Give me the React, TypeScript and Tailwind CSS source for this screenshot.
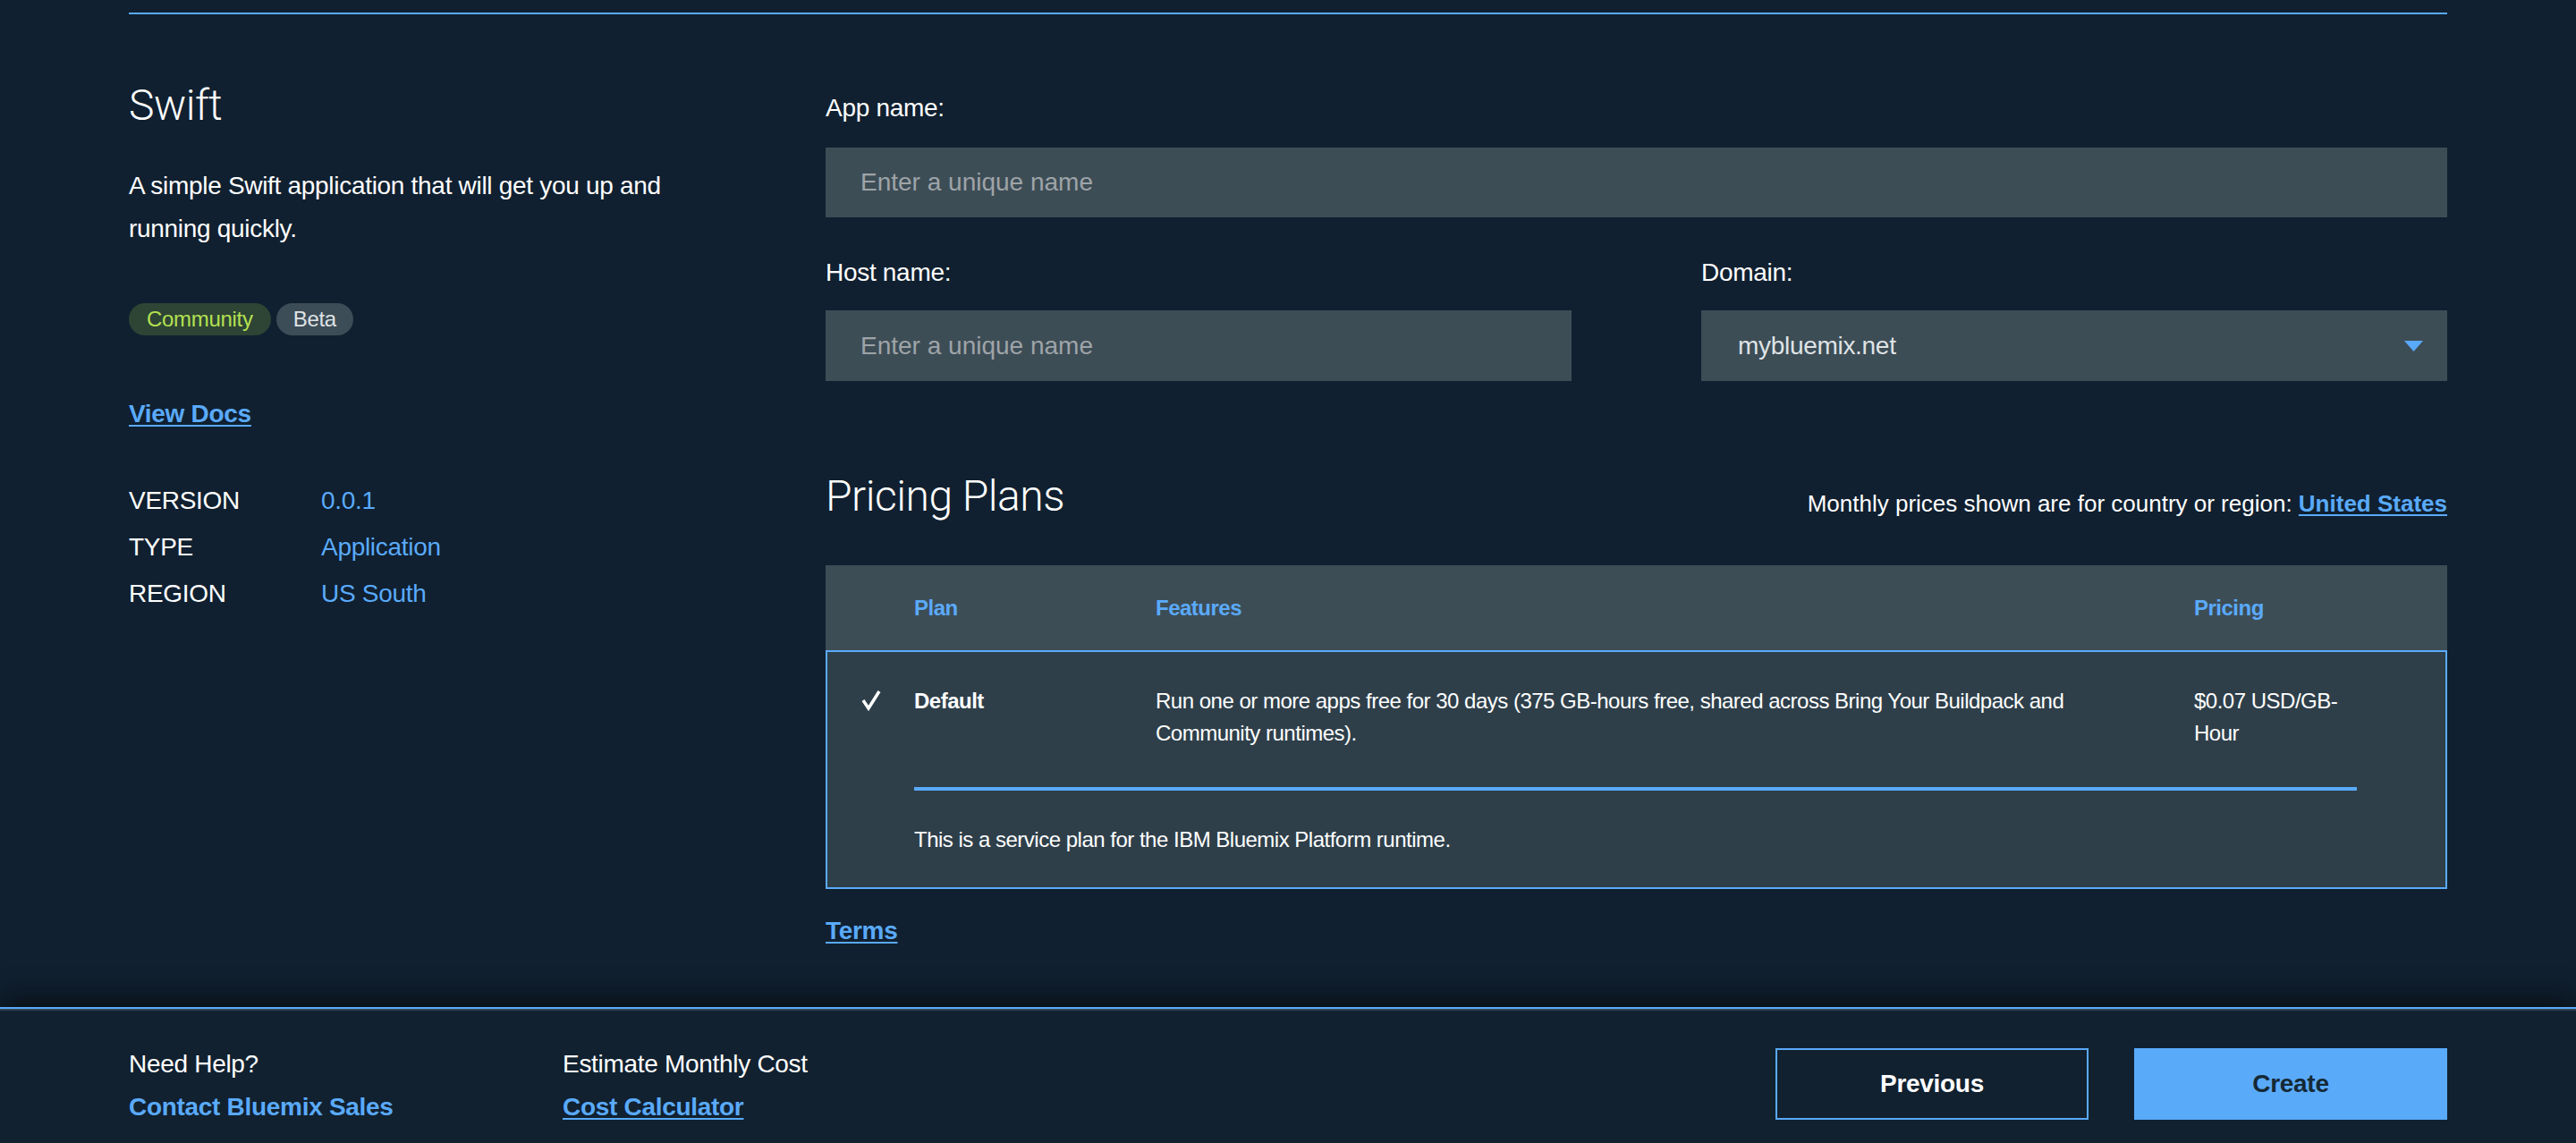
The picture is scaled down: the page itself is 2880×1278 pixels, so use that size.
export default function App() {
  return (
    <div className="min-h-screen flex flex-col bg-[#102030] text-white tracking-[-0.3px] font-['Liberation_Sans',Arial,sans-serif]">
      {/* Main content */}
      <main className="flex-1 px-[144px]">
        <div className="mt-[14px] h-[2px] bg-[#5aaafa]" />

        <div className="flex items-start">
          {/* Left: service details */}
          <div className="w-[779px] shrink-0">
            <h1 className="mt-[78px] text-[48px] leading-[48px] font-light font-['Roboto','Liberation_Sans',sans-serif] tracking-[-0.5px]">
              Swift
            </h1>
            <p className="mt-[42px] max-w-[660px] text-[28px] leading-[48px]">
              A simple Swift application that will get you up and running quickly.
            </p>
            <div className="mt-[59px] flex gap-[6px]">
              <span className="h-[36px] px-[20px] rounded-full bg-[#2e4435] text-[#b4e051] text-[24px] leading-[36px]">
                Community
              </span>
              <span className="h-[36px] px-[19px] rounded-full bg-[#3d4d57] text-[#dfe3e6] text-[24px] leading-[36px]">
                Beta
              </span>
            </div>
            <a href="#" className="mt-[64px] block w-fit text-[28px] leading-[48px] font-bold text-[#5aaafa] underline underline-offset-[3px] decoration-2">
              View Docs
            </a>
            <div className="mt-[47px] text-[28px] leading-[52px]">
              {[
                ["VERSION", "0.0.1"],
                ["TYPE", "Application"],
                ["REGION", "US South"],
              ].map(([k, v]) => (
                <div key={k} className="flex">
                  <span className="w-[215px]">{k}</span>
                  <span className="text-[#5aaafa]">{v}</span>
                </div>
              ))}
            </div>
          </div>

          {/* Right: form + pricing */}
          <div className="flex-1 min-w-0">
            <label className="block mt-[81px] text-[28px] leading-[48px]">App name:</label>
            <input
              readOnly
              placeholder="Enter a unique name"
              className="mt-[20px] block w-full h-[78px] bg-[#3d4d56] px-[39px] text-[28px] tracking-normal text-white placeholder:text-[#9ea4a8] outline-none"
            />

            <div className="mt-[38px] grid grid-cols-2 gap-x-[145px]">
              <div>
                <label className="block text-[28px] leading-[48px]">Host name:</label>
                <input
                  readOnly
                  placeholder="Enter a unique name"
                  className="mt-[18px] block w-full h-[79px] bg-[#3d4d56] px-[39px] text-[28px] tracking-normal text-white placeholder:text-[#9ea4a8] outline-none"
                />
              </div>
              <div>
                <label className="block text-[28px] leading-[48px]">Domain:</label>
                <div className="mt-[18px] h-[79px] bg-[#3d4d56] pl-[41px] pr-[27px] flex items-center justify-between">
                  <span className="text-[28px] text-[#dfe3e6]">mybluemix.net</span>
                  <svg width="21" height="12" viewBox="0 0 21 12">
                    <polygon points="0,0 21,0 10.5,12" fill="#5aaafa" />
                  </svg>
                </div>
              </div>
            </div>

            <div className="mt-[105px] h-[48px] flex items-baseline justify-between">
              <h2 className="text-[48px] leading-[48px] font-light font-['Roboto','Liberation_Sans',sans-serif] tracking-[-0.5px]">
                Pricing Plans
              </h2>
              <p className="text-[26px] leading-[48px] tracking-normal translate-y-[1px]">
                Monthly prices shown are for country or region:{" "}
                <a href="#" className="font-bold text-[#5aaafa] underline underline-offset-[3px] decoration-2">
                  United States
                </a>
              </p>
            </div>

            {/* Plans table */}
            <div className="mt-[53px] tracking-[-0.5px]">
              <div className="h-[95px] bg-[#3d4d56] grid grid-cols-[99px_270px_1161px_182px] items-center text-[24px] font-bold text-[#5aaafa]">
                <span />
                <span>Plan</span>
                <span>Features</span>
                <span>Pricing</span>
              </div>
              <div className="border-2 border-[#5aaafa] bg-[#2e3f4a] pt-[37px] pb-[35px] text-[24px] leading-[36px]">
                <div className="grid grid-cols-[97px_270px_1161px_182px] items-start">
                  <div className="pl-[38px] pt-[5px]">
                    <svg width="22" height="24" viewBox="0 0 22 24">
                      <polyline points="2,12 8,21 20,2" fill="none" stroke="white" strokeWidth="3.5" strokeLinejoin="miter" />
                    </svg>
                  </div>
                  <span className="font-bold">Default</span>
                  <span className="max-w-[1080px]">
                    Run one or more apps free for 30 days (375 GB-hours free, shared across Bring Your Buildpack and Community runtimes).
                  </span>
                  <span>$0.07 USD/GB-Hour</span>
                </div>
                <div className="mt-[42px] ml-[97px] mr-[99px] h-[4px] bg-[#5aaafa]" />
                <p className="mt-[37px] ml-[97px]">This is a service plan for the IBM Bluemix Platform runtime.</p>
              </div>
            </div>

            <a href="#" className="mt-[23px] block w-fit text-[28px] leading-[48px] font-bold text-[#5aaafa] underline underline-offset-[3px] decoration-2">
              Terms
            </a>
          </div>
        </div>
      </main>

      {/* Footer */}
      <footer className="relative h-[152px] bg-[#112130] shadow-[0_-14px_26px_rgba(0,0,0,0.45)]">
        <div className="h-[2px] bg-[#5aaafa]" />
        <div className="h-[2px] bg-[#2f4350]" />
        <div className="px-[144px] pt-[36px] flex items-start justify-between">
          <div className="flex text-[28px] leading-[48px]">
            <div className="w-[485px]">
              <p>Need Help?</p>
              <a href="#" className="block font-bold text-[#5aaafa]">Contact Bluemix Sales</a>
            </div>
            <div>
              <p>Estimate Monthly Cost</p>
              <a href="#" className="block font-bold text-[#5aaafa] underline underline-offset-[3px] decoration-2">
                Cost Calculator
              </a>
            </div>
          </div>
          <div className="mt-[6px] flex gap-[51px]">
            <button className="w-[350px] h-[80px] border-2 border-[#5aaafa] text-[28px] font-bold text-white">
              Previous
            </button>
            <button className="w-[350px] h-[80px] bg-[#5aaafa] text-[28px] font-bold text-[#152935]">
              Create
            </button>
          </div>
        </div>
      </footer>
    </div>
  );
}
